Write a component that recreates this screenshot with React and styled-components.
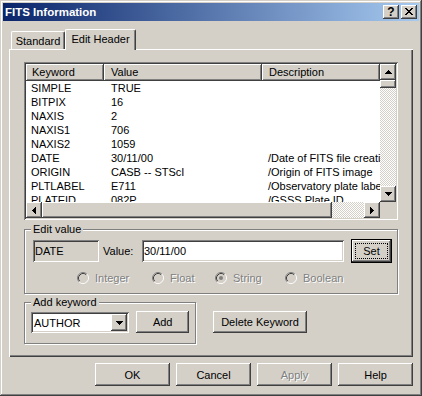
import React from "react";
import styled, { createGlobalStyle, css } from "styled-components";

const GlobalStyle = createGlobalStyle`
  body {
    margin: 0;
    background: #d4d0c8;
    font-family: "Liberation Sans", Arial, sans-serif;
    font-size: 11px;
    color: #000;
  }
  * { box-sizing: border-box; }
`;

const raised = css`
  background: #d4d0c8;
  box-shadow: inset -1px -1px #404040, inset 1px 1px #fff,
    inset -2px -2px #808080, inset 2px 2px #d4d0c8;
`;

const sunken = css`
  box-shadow: inset 1px 1px #808080, inset -1px -1px #fff,
    inset 2px 2px #404040, inset -2px -2px #d4d0c8;
`;

const disabledText = css`
  color: #808080;
  text-shadow: 1px 1px 0 #fff;
`;

const ROWS = [
  ["SIMPLE", "TRUE", ""],
  ["BITPIX", "16", ""],
  ["NAXIS", "2", ""],
  ["NAXIS1", "706", ""],
  ["NAXIS2", "1059", ""],
  ["DATE", "30/11/00", "/Date of FITS file creation"],
  ["ORIGIN", "CASB -- STScI", "/Origin of FITS image"],
  ["PLTLABEL", "E711", "/Observatory plate label"],
  ["PLATEID", "082P", "/GSSS Plate ID"],
];

const X_GLYPH = [
  "11000011",
  "01100110",
  "00111100",
  "00011000",
  "00111100",
  "01100110",
  "11000011",
];

const Arrow = ({ dir }) => {
  const paths = {
    up: "M3 0h1v1h1v1h1v1h1v1H0V3h1V2h1V1h1z",
    down: "M0 0h7v1H6v1H5v1H4v1H3V3H2V2H1V1H0z",
    left: "M3 0h1v7H3V6H2V5H1V4H0V3h1V2h1V1h1z",
    right: "M0 0h1v1h1v1h1v1h1v1H3v1H2v1H1v1H0z",
  };
  const vertical = dir === "up" || dir === "down";
  return (
    <svg width={vertical ? 7 : 4} height={vertical ? 4 : 7} shapeRendering="crispEdges">
      <path d={paths[dir]} fill="#000" />
    </svg>
  );
};

const CloseGlyph = () => (
  <svg width="8" height="7" shapeRendering="crispEdges">
    {X_GLYPH.map((row, y) =>
      row.split("").map((c, x) =>
        c === "1" ? <rect key={`${x}-${y}`} x={x} y={y} width="1" height="1" fill="#000" /> : null
      )
    )}
  </svg>
);

const Radio = ({ checked, label }) => (
  <RadioItem>
    <svg width="12" height="12">
      <circle cx="6" cy="6" r="5" fill="#d4d0c8" />
      <path d="M2.11 9.89A5.5 5.5 0 0 1 9.89 2.11" stroke="#808080" fill="none" />
      <path d="M9.89 2.11A5.5 5.5 0 0 1 2.11 9.89" stroke="#fff" fill="none" />
      <path d="M2.82 9.18A4.5 4.5 0 0 1 9.18 2.82" stroke="#404040" fill="none" />
      <path d="M9.18 2.82A4.5 4.5 0 0 1 2.82 9.18" stroke="#d4d0c8" fill="none" />
      {checked && <circle cx="6" cy="6" r="2" fill="#808080" />}
    </svg>
    <span>{label}</span>
  </RadioItem>
);

const App = () => {
  return (
    <>
      <GlobalStyle />
      <Window>
        <TitleBar>
          <Title>FITS Information</Title>
          <CaptionButtons>
            <CaptionButton>?</CaptionButton>
            <CaptionButton><CloseGlyph /></CaptionButton>
          </CaptionButtons>
        </TitleBar>
        <Body>
          <Tabs>
            <Tab $w={54}>Standard</Tab>
            <Tab $w={71} $active>Edit Header</Tab>
          </Tabs>
          <Panel>
            <ListView>
              <ListArea>
                <HeaderRow>
                  <HeaderCell $pad={6}>Keyword</HeaderCell>
                  <HeaderCell $pad={7}>Value</HeaderCell>
                  <HeaderCell $pad={7}>Description</HeaderCell>
                </HeaderRow>
                <ListBody>
                  {ROWS.map(([k, v, d]) => (
                    <Row key={k}>
                      <Cell $pad={5}>{k}</Cell>
                      <Cell $pad={7}>{v}</Cell>
                      <Cell $pad={6}>{d}</Cell>
                    </Row>
                  ))}
                </ListBody>
              </ListArea>
              <VScroll>
                <ScrollButton><Arrow dir="up" /></ScrollButton>
                <Thumb $h={8} />
                <Track />
                <ScrollButton><Arrow dir="down" /></ScrollButton>
              </VScroll>
              <HScroll>
                <ScrollButton><Arrow dir="left" /></ScrollButton>
                <Thumb $w={290} />
                <Track />
                <ScrollButton><Arrow dir="right" /></ScrollButton>
              </HScroll>
              <Corner />
            </ListView>

            <EditGroup>
              <Legend $ml={-2}>Edit value</Legend>
              <EditRow>
                <DateBox>DATE</DateBox>
                <FieldLabel>Value:</FieldLabel>
                <ValueInput>30/11/00</ValueInput>
                <DefaultButton>
                  <Focus>Set</Focus>
                </DefaultButton>
              </EditRow>
              <RadioRow>
                <Radio label="Integer" />
                <Radio label="Float" />
                <Radio label="String" checked />
                <Radio label="Boolean" />
              </RadioRow>
            </EditGroup>

            <AddRow>
              <AddGroup>
                <Legend $ml={0}>Add keyword</Legend>
                <ComboRow>
                  <Combo>
                    <ComboText>AUTHOR</ComboText>
                    <DropButton><Arrow dir="down" /></DropButton>
                  </Combo>
                  <Button $w={53} $h={22}>Add</Button>
                </ComboRow>
              </AddGroup>
              <DeleteButton $w={94} $h={22}>Delete Keyword</DeleteButton>
            </AddRow>
          </Panel>
          <Footer>
            <Button $w={75} $h={23}>OK</Button>
            <Button $w={75} $h={23}>Cancel</Button>
            <Button $w={75} $h={23} $disabled>Apply</Button>
            <Button $w={75} $h={23}>Help</Button>
          </Footer>
        </Body>
      </Window>
    </>
  );
};

export default App;

const Window = styled.div`
  width: 422px;
  height: 396px;
  padding: 3px;
  background: #d4d0c8;
  box-shadow: inset -1px -1px #404040, inset 1px 1px #d4d0c8,
    inset -2px -2px #808080, inset 2px 2px #fff;
  display: flex;
  flex-direction: column;
`;

const TitleBar = styled.div`
  height: 18px;
  display: flex;
  align-items: center;
  padding: 0 2px;
  background: linear-gradient(to right, #0a246a, #a6caf0);
`;

const Title = styled.div`
  color: #fff;
  font-weight: bold;
  font-size: 11.5px;
`;

const CaptionButtons = styled.div`
  margin-left: auto;
  display: flex;
  gap: 2px;
`;

const CaptionButton = styled.div`
  ${raised};
  width: 16px;
  height: 14px;
  display: flex;
  align-items: center;
  justify-content: center;
  font-weight: bold;
  font-size: 12px;
  line-height: 14px;
  padding-bottom: 1px;
`;

const Body = styled.div`
  flex: 1;
  display: flex;
  flex-direction: column;
  padding: 8px 6px 7px;
`;

const Tabs = styled.div`
  height: 20px;
  display: flex;
  align-items: flex-end;
  padding-left: 2px;
`;

const Tab = styled.div`
  width: ${(p) => p.$w}px;
  height: ${(p) => (p.$active ? 21 : 18)}px;
  margin-bottom: ${(p) => (p.$active ? -1 : 0)}px;
  position: ${(p) => (p.$active ? "relative" : "static")};
  background: #d4d0c8;
  border-top: 1px solid #fff;
  border-left: 1px solid #fff;
  border-right: 1px solid #404040;
  border-radius: 2px 2px 0 0;
  box-shadow: inset -1px 0 #808080;
  display: flex;
  align-items: center;
  justify-content: center;
  padding-bottom: ${(p) => (p.$active ? 2 : 0)}px;
`;

const Panel = styled.div`
  height: 308px;
  padding: 13px 15px 0;
  display: flex;
  flex-direction: column;
  box-shadow: inset 1px 1px #fff, inset -1px -1px #404040, inset -2px -2px #808080;
`;

const ListView = styled.div`
  ${sunken};
  height: 158px;
  padding: 2px;
  background: #fff;
  display: grid;
  grid-template-columns: 354px 16px;
  grid-template-rows: 17px 121px 16px;
`;

const ListArea = styled.div`
  grid-row: 1 / 3;
  grid-column: 1;
  overflow: hidden;
  display: flex;
  flex-direction: column;
`;

const HeaderRow = styled.div`
  height: 17px;
  flex: none;
  display: grid;
  grid-template-columns: 78px 158px 118px;
`;

const HeaderCell = styled.div`
  ${raised};
  padding-left: ${(p) => p.$pad}px;
  line-height: 17px;
  white-space: nowrap;
  overflow: hidden;
`;

const ListBody = styled.div`
  flex: 1;
  overflow: hidden;
`;

const Row = styled.div`
  height: 14px;
  display: grid;
  grid-template-columns: 78px 158px 118px;
  line-height: 14px;
`;

const Cell = styled.div`
  padding-left: ${(p) => p.$pad}px;
  white-space: nowrap;
  overflow: hidden;
`;

const VScroll = styled.div`
  grid-row: 1 / 3;
  grid-column: 2;
  display: flex;
  flex-direction: column;
`;

const HScroll = styled.div`
  grid-row: 3;
  grid-column: 1;
  display: flex;
`;

const ScrollButton = styled.div`
  ${raised};
  width: 16px;
  height: 16px;
  flex: none;
  display: flex;
  align-items: center;
  justify-content: center;
`;

const Thumb = styled.div`
  ${raised};
  flex: none;
  width: ${(p) => (p.$w ? `${p.$w}px` : "16px")};
  height: ${(p) => (p.$h ? `${p.$h}px` : "16px")};
`;

const Track = styled.div`
  flex: 1;
  background: repeating-conic-gradient(#fff 0 25%, #d4d0c8 0 50%) 0 0 / 2px 2px;
`;

const Corner = styled.div`
  grid-row: 3;
  grid-column: 2;
  background: #d4d0c8;
`;

const GroupBox = styled.fieldset`
  margin: 0;
  min-width: 0;
  border: 1px solid #808080;
  box-shadow: inset 1px 1px #fff, 1px 1px 0 #fff;
`;

const Legend = styled.legend`
  padding: 0 2px;
  margin-left: ${(p) => p.$ml}px;
  line-height: 14px;
  background: #d4d0c8;
`;

const EditGroup = styled(GroupBox)`
  margin-top: 2px;
  padding: 3px 5px 7px 8px;
`;

const EditRow = styled.div`
  display: flex;
  align-items: center;
  height: 24px;
`;

const DateBox = styled.div`
  ${sunken};
  width: 66px;
  height: 22px;
  padding-left: 2px;
  line-height: 22px;
  background: #d4d0c8;
`;

const FieldLabel = styled.div`
  width: 39px;
  margin-left: 4px;
`;

const ValueInput = styled.div`
  ${sunken};
  width: 202px;
  height: 22px;
  padding-left: 2px;
  line-height: 22px;
  background: #fff;
`;

const DefaultButton = styled.div`
  width: 41px;
  height: 24px;
  margin-left: 7px;
  border: 1px solid #000;
  background: #d4d0c8;
  box-shadow: inset -1px -1px #404040, inset 1px 1px #fff, inset -2px -2px #808080;
  display: flex;
  align-items: center;
  justify-content: center;
`;

const Focus = styled.span`
  width: 33px;
  height: 16px;
  border: 1px dotted #000;
  display: flex;
  align-items: center;
  justify-content: center;
`;

const RadioRow = styled.div`
  margin: 7px 0 0 44px;
  height: 16px;
  display: grid;
  grid-template-columns: 75px 63px 70px auto;
  align-items: center;
`;

const RadioItem = styled.label`
  ${disabledText};
  display: flex;
  align-items: center;
  gap: 6px;

  svg {
    flex: none;
  }
`;

const AddRow = styled.div`
  margin-top: 1px;
  display: flex;
  align-items: flex-start;
`;

const AddGroup = styled(GroupBox)`
  width: 172px;
  padding: 2px 6px 10px 6px;
`;

const ComboRow = styled.div`
  display: flex;
  align-items: flex-end;
  gap: 7px;
  height: 22px;
`;

const Combo = styled.div`
  ${sunken};
  width: 99px;
  height: 21px;
  background: #fff;
  padding: 2px;
  display: flex;
  align-items: center;
`;

const ComboText = styled.span`
  padding-left: 1px;
  flex: 1;
`;

const DropButton = styled.div`
  ${raised};
  width: 16px;
  height: 17px;
  display: flex;
  align-items: center;
  justify-content: center;
`;

const Button = styled.div`
  ${raised};
  width: ${(p) => p.$w}px;
  height: ${(p) => p.$h}px;
  display: flex;
  align-items: center;
  justify-content: center;
  ${(p) => p.$disabled && disabledText};
`;

const DeleteButton = styled(Button)`
  margin: 16px 0 0 17px;
`;

const Footer = styled.div`
  margin-top: 6px;
  display: flex;
  justify-content: flex-end;
  gap: 6px;
`;
